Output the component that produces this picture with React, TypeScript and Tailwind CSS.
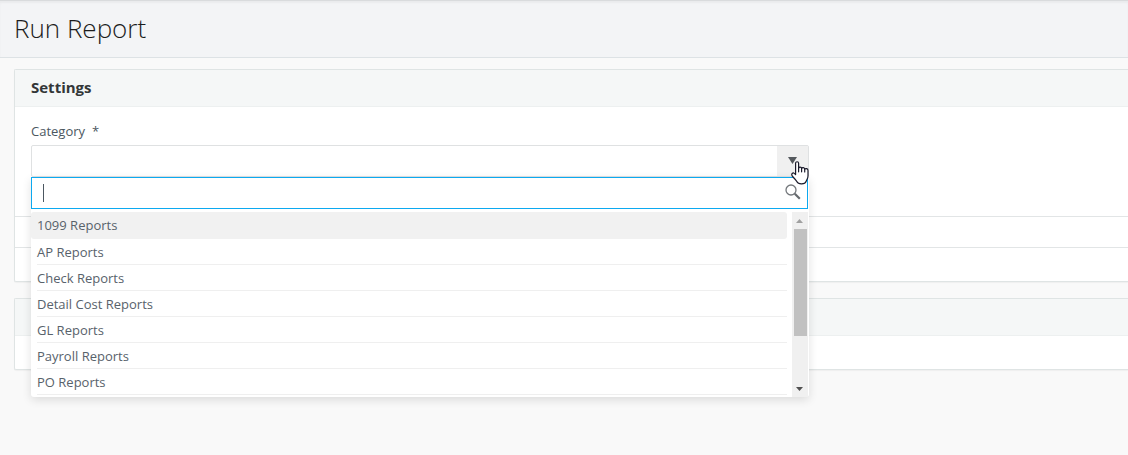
import { useState } from "react";

const categories = [
  "1099 Reports",
  "AP Reports",
  "Check Reports",
  "Detail Cost Reports",
  "GL Reports",
  "Payroll Reports",
  "PO Reports",
];

function SearchIcon() {
  return (
    <svg width="18" height="18" viewBox="0 0 18 18" fill="none" aria-hidden="true">
      <circle cx="7" cy="7" r="5" stroke="#74787c" strokeWidth="1.3" />
      <path d="M10.8 10.8 15.8 15.8" stroke="#666a6e" strokeWidth="2.2" />
    </svg>
  );
}

function HandPointer() {
  return (
    <svg width="18" height="24" viewBox="0 0 18 24" aria-hidden="true">
      <path
        d="M4.6 13.6V2.3C4.6 .2 7.6 .2 7.6 2.3V7.2C7.8 5.6 10.5 5.7 10.6 7.4C11.1 6.2 13.6 6.4 13.7 8.2C14.5 7.2 17 7.4 17 9.5V15C17 17.6 15.8 18.6 15.2 20.2C14 23.6 7.4 23.8 5.8 20.6C4.8 18.6 3.2 17.6 1.2 14.8C-.1 12.9 1.9 11.3 3.3 12.4Z"
        fill="#fff"
        stroke="#1b1b2b"
        strokeWidth="1.2"
        strokeLinejoin="round"
      />
      <path d="M7.6 7V10.8M10.6 7.4V10.8M13.7 8.2V11" stroke="#1b1b2b" strokeWidth="1.2" strokeLinecap="round" />
    </svg>
  );
}

function Scrollbar() {
  return (
    <div className="flex w-4 shrink-0 flex-col items-center bg-[#f0f0f0]" aria-hidden="true">
      <svg className="h-[17px] w-4 shrink-0" viewBox="0 0 16 17">
        <path d="M7.5 7 11 11H4Z" fill="#a0a0a0" />
      </svg>
      <div className="h-[107px] w-[13px] bg-[#c1c1c1]" />
      <svg className="mt-auto h-[17px] w-4 shrink-0" viewBox="0 0 16 17">
        <path d="M4 7H11L7.5 11Z" fill="#505050" />
      </svg>
    </div>
  );
}

function CategoryMenu({ onPick }: { onPick: (name: string) => void }) {
  const [query, setQuery] = useState("");
  const shown = categories.filter((c) => c.toLowerCase().includes(query.toLowerCase()));
  return (
    <div className="absolute inset-x-0 top-8 z-10 rounded-b-[3px] bg-white shadow-[0_3px_10px_rgba(0,0,0,0.12)]">
      <div className="relative mr-px">
        <input
          aria-label="Search categories"
          value={query}
          onChange={(e) => setQuery(e.target.value)}
          className="block h-8 w-full border border-[#0ca9f0] bg-white pr-8 pl-3 text-[13px] text-[#4c5761] outline-none"
        />
        {query === "" && <span className="absolute top-[7px] left-3 h-[18px] w-px bg-[#4c5761]" />}
        <span className="absolute top-[6px] right-[6px]">
          <SearchIcon />
        </span>
      </div>
      <div className="mt-[3px] mr-px flex h-[185px] overflow-hidden">
        <ul role="listbox" aria-label="Categories" className="min-w-0 flex-1">
          {shown.map((name, i) => (
            <li
              key={name}
              role="option"
              aria-selected={i === 0}
              onClick={() => onPick(name)}
              className={
                i === 0
                  ? "mr-[5px] h-[27px] rounded-[3px] bg-[#f1f1f1] pl-[6px] text-[13px] leading-[27px]"
                  : "mr-[5px] ml-[6px] h-[26px] border-b border-[#efefef] text-[13px] leading-[26px]"
              }
            >
              {name}
            </li>
          ))}
        </ul>
        <Scrollbar />
      </div>
    </div>
  );
}

export default function App() {
  const [category, setCategory] = useState("");
  const [open, setOpen] = useState(true);

  return (
    <div className="min-h-screen overflow-x-hidden bg-[#f9f9f9] font-['Open_Sans',sans-serif] text-[#58626b]">
      <header className="border-t border-b border-t-[#d9dbdd] border-b-[#dde2e5] bg-[#f3f4f6] px-[14px] pt-2 pb-[9px] shadow-[inset_0_2px_2px_rgba(0,0,0,0.04)]">
        <h1 className="text-[26px] leading-[39px] font-light text-[#1c1c1c]">Run Report</h1>
      </header>
      <main className="flex flex-col gap-4 pt-[11px] pl-[14px]">
        <section className="rounded-l-xs border-y border-l border-[#dfe4e4] bg-white shadow-[0_1px_1px_rgba(0,0,0,0.04)]">
          <h2 className="border-b border-[#edf0f0] bg-[#f5f7f7] px-4 pb-[2px] text-[15px] leading-[34px] font-bold text-[#333638]">
            Settings
          </h2>
          <div className="px-4 pt-[14px]">
            <label htmlFor="category" className="flex gap-[7px] pb-1 text-[13px] leading-5 text-[#4c5761]">
              Category <span>*</span>
            </label>
            <div className="relative w-[72%]">
              <button
                id="category"
                type="button"
                aria-expanded={open}
                onClick={() => setOpen(!open)}
                className="flex h-8 w-full items-stretch justify-between rounded-xs border border-[#dfe1e2] bg-white text-left text-[13px]"
              >
                <span className="pl-3 leading-[30px]">{category}</span>
                <span className="flex w-[31px] items-center justify-center bg-[#f0f0f0]">
                  <svg width="10" height="8" viewBox="0 0 10 8" aria-hidden="true">
                    <path d="M0 0H9L4.5 7Z" fill="#55595d" />
                  </svg>
                </span>
              </button>
              {open && (
                <CategoryMenu
                  onPick={(name) => {
                    setCategory(name);
                    setOpen(false);
                  }}
                />
              )}
              <span className="pointer-events-none absolute top-4 right-0 z-20">
                <HandPointer />
              </span>
            </div>
          </div>
          <div className="mt-[39px] h-8 border-y border-[#e2e5e6]" />
          <div className="h-[33px]" />
        </section>
        <section className="rounded-l-xs border-y border-l border-[#dfe4e4] bg-white shadow-[0_1px_1px_rgba(0,0,0,0.04)]">
          <div className="h-[37px] border-b border-[#edf0f0] bg-[#f5f7f7]" />
          <div className="h-[33px]" />
        </section>
      </main>
    </div>
  );
}
